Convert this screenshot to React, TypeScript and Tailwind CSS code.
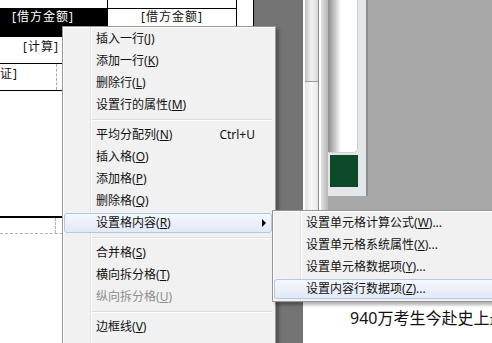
import React from 'react';
import clsx from 'clsx';

type MenuEntry =
  | { sep: true }
  | {
      sep?: false;
      label: string;
      hotkey: string;
      shortcut?: string;
      submenu?: boolean;
      active?: boolean;
      disabled?: boolean;
      ellipsis?: boolean;
    };

const mainItems: MenuEntry[] = [
  { label: '插入一行', hotkey: 'J' },
  { label: '添加一行', hotkey: 'K' },
  { label: '删除行', hotkey: 'L' },
  { label: '设置行的属性', hotkey: 'M' },
  { sep: true },
  { label: '平均分配列', hotkey: 'N', shortcut: 'Ctrl+U' },
  { label: '插入格', hotkey: 'O' },
  { label: '添加格', hotkey: 'P' },
  { label: '删除格', hotkey: 'Q' },
  { label: '设置格内容', hotkey: 'R', submenu: true, active: true },
  { sep: true },
  { label: '合并格', hotkey: 'S' },
  { label: '横向拆分格', hotkey: 'T' },
  { label: '纵向拆分格', hotkey: 'U', disabled: true },
  { sep: true },
  { label: '边框线', hotkey: 'V' },
];

const subItems: MenuEntry[] = [
  { label: '设置单元格计算公式', hotkey: 'W', ellipsis: true },
  { label: '设置单元格系统属性', hotkey: 'X', ellipsis: true },
  { label: '设置单元格数据项', hotkey: 'Y', ellipsis: true },
  { label: '设置内容行数据项', hotkey: 'Z', ellipsis: true, active: true },
];

function MenuRow({ entry }: { entry: MenuEntry }) {
  if (entry.sep) {
    return (
      <div className="h-[8px] flex items-center pl-[28px]">
        <div className="w-full h-0 border-t border-t-[#dcdcdc] border-b border-b-white" />
      </div>
    );
  }
  return (
    <div className="relative h-[22px] py-[1px]">
      <div
        className={clsx(
          'h-full flex items-center pl-[31px] pr-[16px] rounded-[3px] border',
          entry.active
            ? 'border-[#b4c7e5] bg-linear-to-b from-[#f5f8fd] to-[#e1e9f6]'
            : 'border-transparent',
          entry.disabled ? 'text-[#8e8e8e]' : 'text-[#111]'
        )}
      >
        <span className="whitespace-nowrap">
          {entry.label}(
          <span className="underline underline-offset-[1px]">{entry.hotkey}</span>)
          {entry.ellipsis && '...'}
        </span>
        {entry.shortcut && <span className="ml-auto">{entry.shortcut}</span>}
        {entry.submenu && (
          <span className="ml-auto -mr-[11px] w-0 h-0 border-y-[4px] border-y-transparent border-l-[4px] border-l-black" />
        )}
      </div>
    </div>
  );
}

function ContextMenu({
  items,
  className,
}: {
  items: MenuEntry[];
  className: string;
}) {
  return (
    <div
      className={clsx(
        'absolute border border-[#979797] bg-[#f1f1f1] pl-[1px] pr-[3px] py-[1px] text-[12px] font-[\'Noto_Sans\',\'Noto_Sans_CJK_SC\',sans-serif] shadow-[inset_1px_1px_0_#ffffff,3px_3px_3px_rgba(0,0,0,0.3)]',
        className
      )}
    >
      <div className="absolute left-[27px] top-0 bottom-0 w-[2px] border-l border-l-[#e0e1e1] border-r border-r-white" />
      {items.map((entry, i) => (
        <MenuRow key={i} entry={entry} />
      ))}
    </div>
  );
}

function TablePage() {
  return (
    <div className="w-[254px] shrink-0 bg-white border-r border-black text-[12px] tracking-[1px] font-['Noto_Sans','Noto_Sans_CJK_SC',sans-serif] text-[#111]">
      <div className="w-[237px] border-r border-black">
        <div className="flex h-[9px] border-b border-black">
          <div className="w-[108px] border-r border-black" />
        </div>
        <div className="flex h-[28px] border-b border-black leading-[16px]">
          <div className="w-[108px] bg-black border-r border-black text-white pl-[12px]">
            [借方金额]
          </div>
          <div className="flex-1 text-center">[借方金额]</div>
        </div>
        <div className="h-[27px] border-b border-black pl-[23px] pt-[2px] leading-[16px]">
          [计算]
        </div>
        <div className="flex h-[27px] border-b border-black leading-[16px]">
          <div className="w-[57px] border-r border-dashed border-[#a8a8a8] pt-[2px]">证]</div>
        </div>
      </div>
      <div className="mt-[125px] w-[237px] border-t-2 border-black">
        <div className="h-[16px] flex border-b border-dashed border-[#b0b0b0]">
          <div className="w-[56px] border-r border-dashed border-[#b0b0b0]" />
        </div>
      </div>
    </div>
  );
}

function ScrollStrip() {
  return (
    <div className="w-[25px] shrink-0 flex">
      <div className="w-[2px] bg-white" />
      <div className="w-[13px] flex flex-col">
        <div className="h-[82px] bg-linear-to-r from-[#c4c4c4] via-[#f3f3f3] to-[#d8d8d8] border-b border-[#9a9a9a]" />
        <div className="flex-1 bg-linear-to-r from-[#e2e2e2] via-[#f8f8f8] to-[#e6e6e6]" />
      </div>
      <div className="w-[1px] bg-[#8a8a8a]" />
      <div className="w-[2px] bg-white" />
      <div className="w-[7px] bg-linear-to-r from-[#e2e2e2] to-[#b6b6b6]" />
    </div>
  );
}

function SidePanel() {
  return (
    <div className="w-[40px] shrink-0 flex flex-col">
      <div className="h-[196px] flex flex-col bg-[#e3e7e9] border-r-2 border-[#8e8e8e]">
        <div className="h-[153px] mr-[8px] rounded-br-[5px] bg-linear-to-r from-[#8c8c8c] via-white via-45% to-white border-r border-b border-[#cdd1d3]" />
        <div className="mt-[2px] ml-[2px] w-[28px] h-[32px] bg-[#0d4a2a]" />
      </div>
    </div>
  );
}

export default function App() {
  return (
    <div className="relative w-[492px] h-[343px] overflow-hidden flex bg-[#a8a8a8]">
      <TablePage />
      <div className="w-[49px] shrink-0 bg-[#737373]" />
      <div className="flex-1 flex flex-col">
        <div className="h-[302px] flex">
          <ScrollStrip />
          <SidePanel />
          <div className="flex-1 bg-[#a8a8a8]" />
        </div>
        <div className="flex-1 bg-white pl-[47px] pt-[5px] text-[16px] leading-[22px] text-[#111] whitespace-nowrap font-['Noto_Sans','Noto_Sans_CJK_SC',sans-serif]">
          940万考生今赴史上最
        </div>
      </div>

      <ContextMenu items={mainItems} className="left-[62px] top-[26px] w-[214px] h-[340px]" />
      <ContextMenu items={subItems} className="left-[272px] top-[210px] w-[240px]" />
    </div>
  );
}
